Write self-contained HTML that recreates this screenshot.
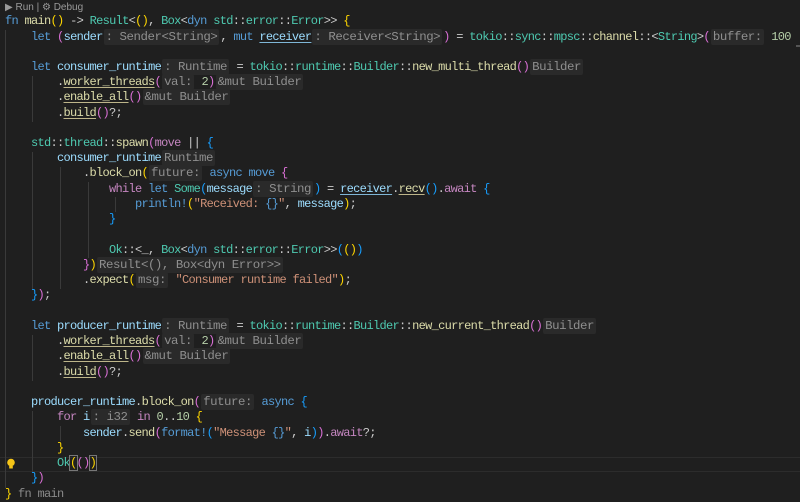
<!DOCTYPE html>
<html><head><meta charset="utf-8"><style>
html,body{margin:0;padding:0;background:#1f1f1f;width:800px;height:502px;overflow:hidden}
.ed{position:relative;width:800px;height:502px;font-family:"Liberation Mono","DejaVu Sans Mono",monospace;font-size:12px;letter-spacing:-0.7px;color:#cccccc}
.l{position:absolute;left:5px;height:15px;line-height:15px;white-space:pre}
.k{color:#569cd6}.c{color:#c586c0}.v{color:#9cdcfe}.t{color:#4ec9b0}.f{color:#dcdcaa}.s{color:#ce9178}.n{color:#b5cea8}.w{color:#d4d4d4}
.p1{color:#ffd700}.p2{color:#da70d6}.p3{color:#179fff}
.h{color:#8f8f8f;background:#2a2a2a;border-radius:2px;padding:1px 2px;margin:0 1px;font-size:12.4px;letter-spacing:-0.45px}
.u{text-decoration:underline;text-decoration-color:#bdb58a;text-underline-offset:2px}
.ub{text-decoration:underline;text-decoration-color:#7fb6d6;text-underline-offset:2px}
.g{position:absolute;width:1px;background:#3a3a3a}
.lens{position:absolute;left:5px;top:2px;font-family:"Liberation Sans","DejaVu Sans",sans-serif;font-size:10px;letter-spacing:0;color:#9a9a9a}
.cur{position:absolute;left:0;width:800px;height:15px;border-top:1px solid #2c2c2c;border-bottom:1px solid #2c2c2c;box-sizing:border-box}
</style></head><body><div class="ed">
<div class="lens">▶ Run | ⚙ Debug</div>
<div class="cur" style="top:457px"></div>
<div class="g" style="left:5px;top:30px;height:458px"></div>
<div class="g" style="left:32px;top:76px;height:46px"></div>
<div class="g" style="left:32px;top:152px;height:137px"></div>
<div class="g" style="left:60px;top:167px;height:122px"></div>
<div class="g" style="left:88px;top:182px;height:76px"></div>
<div class="g" style="left:115px;top:197px;height:15px"></div>
<div class="g" style="left:32px;top:335px;height:46px"></div>
<div class="g" style="left:32px;top:411px;height:61px"></div>
<div class="g" style="left:60px;top:426px;height:15px"></div>
<div class="l" style="top:14px"><span class="k">fn</span> <span class="f">main</span><span class="p1">()</span> -&gt; <span class="t">Result</span>&lt;<span class="p1">()</span>, <span class="t">Box</span>&lt;<span class="k">dyn</span> <span class="t">std</span>::<span class="t">error</span>::<span class="t">Error</span>&gt;&gt; <span class="p1">{</span></div>
<div class="l" style="top:30px">    <span class="k">let</span> <span class="p2">(</span><span class="v">sender</span><span class="h">: Sender&lt;String&gt;</span>, <span class="k">mut</span> <span class="v ub">receiver</span><span class="h">: Receiver&lt;String&gt;</span><span class="p2">)</span> = <span class="t">tokio</span>::<span class="t">sync</span>::<span class="t">mpsc</span>::<span class="f">channel</span>::&lt;<span class="t">String</span>&gt;<span class="p2">(</span><span class="h">buffer:</span> <span class="n">100</span></div>
<div class="l" style="top:60px">    <span class="k">let</span> <span class="v">consumer_runtime</span><span class="h">: Runtime</span> = <span class="t">tokio</span>::<span class="t">runtime</span>::<span class="t">Builder</span>::<span class="f">new_multi_thread</span><span class="p2">()</span><span class="h">Builder</span></div>
<div class="l" style="top:75px">        .<span class="f u">worker_threads</span><span class="p2">(</span><span class="h">val:</span> <span class="n">2</span><span class="p2">)</span><span class="h">&amp;mut Builder</span></div>
<div class="l" style="top:90px">        .<span class="f u">enable_all</span><span class="p2">()</span><span class="h">&amp;mut Builder</span></div>
<div class="l" style="top:106px">        .<span class="f u">build</span><span class="p2">()</span>?;</div>
<div class="l" style="top:136px">    <span class="t">std</span>::<span class="t">thread</span>::<span class="f">spawn</span><span class="p2">(</span><span class="c">move</span> || <span class="p3">{</span></div>
<div class="l" style="top:151px">        <span class="v">consumer_runtime</span><span class="h">Runtime</span></div>
<div class="l" style="top:166px">            .<span class="f">block_on</span><span class="p1">(</span><span class="h">future:</span> <span class="k">async</span> <span class="k">move</span> <span class="p2">{</span></div>
<div class="l" style="top:182px">                <span class="c">while</span> <span class="k">let</span> <span class="t">Some</span><span class="p3">(</span><span class="v">message</span><span class="h">: String</span><span class="p3">)</span> = <span class="v ub">receiver</span>.<span class="f u">recv</span><span class="p3">()</span>.<span class="c">await</span> <span class="p3">{</span></div>
<div class="l" style="top:197px">                    <span class="k">println!</span><span class="p1">(</span><span class="s">"Received: </span><span class="k">{}</span><span class="s">"</span>, <span class="v">message</span><span class="p1">)</span>;</div>
<div class="l" style="top:212px">                <span class="p3">}</span></div>
<div class="l" style="top:243px">                <span class="t">Ok</span>::&lt;_, <span class="t">Box</span>&lt;<span class="k">dyn</span> <span class="t">std</span>::<span class="t">error</span>::<span class="t">Error</span>&gt;&gt;<span class="p3">(</span><span class="p1">()</span><span class="p3">)</span></div>
<div class="l" style="top:258px">            <span class="p2">}</span><span class="p1">)</span><span class="h">Result&lt;(), Box&lt;dyn Error&gt;&gt;</span></div>
<div class="l" style="top:273px">            .<span class="f">expect</span><span class="p1">(</span><span class="h">msg:</span> <span class="s">"Consumer runtime failed"</span><span class="p1">)</span>;</div>
<div class="l" style="top:288px">    <span class="p3">}</span><span class="p2">)</span>;</div>
<div class="l" style="top:319px">    <span class="k">let</span> <span class="v">producer_runtime</span><span class="h">: Runtime</span> = <span class="t">tokio</span>::<span class="t">runtime</span>::<span class="t">Builder</span>::<span class="f">new_current_thread</span><span class="p2">()</span><span class="h">Builder</span></div>
<div class="l" style="top:334px">        .<span class="f u">worker_threads</span><span class="p2">(</span><span class="h">val:</span> <span class="n">2</span><span class="p2">)</span><span class="h">&amp;mut Builder</span></div>
<div class="l" style="top:349px">        .<span class="f u">enable_all</span><span class="p2">()</span><span class="h">&amp;mut Builder</span></div>
<div class="l" style="top:365px">        .<span class="f u">build</span><span class="p2">()</span>?;</div>
<div class="l" style="top:395px">    <span class="v">producer_runtime</span>.<span class="f">block_on</span><span class="p2">(</span><span class="h">future:</span> <span class="k">async</span> <span class="p3">{</span></div>
<div class="l" style="top:410px">        <span class="c">for</span> <span class="v">i</span><span class="h">: i32</span> <span class="c">in</span> <span class="n">0</span>..<span class="n">10</span> <span class="p1">{</span></div>
<div class="l" style="top:426px">            <span class="v">sender</span>.<span class="f">send</span><span class="p2">(</span><span class="k">format!</span><span class="p3">(</span><span class="s">"Message </span><span class="k">{}</span><span class="s">"</span>, <span class="v">i</span><span class="p3">)</span><span class="p2">)</span>.<span class="c">await</span>?;</div>
<div class="l" style="top:441px">        <span class="p1">}</span></div>
<div class="l" style="top:456px">        <span class="t">Ok</span><span class="p1" style="outline:1px solid #777">(</span><span class="p2">()</span><span class="p1" style="outline:1px solid #777">)</span></div>
<div class="l" style="top:471px">    <span class="p3">}</span><span class="p2">)</span></div>
<div class="l" style="top:487px"><span class="p1">}</span> <span style="color:#8a8a8a">fn main</span></div>
<svg style="position:absolute;left:6px;top:458px" width="10" height="12" viewBox="0 0 10 12"><circle cx="5" cy="4.5" r="3.8" fill="#f5c518"/><rect x="3.2" y="8" width="3.6" height="2.5" fill="#f5c518"/></svg>
<div style="position:absolute;left:796px;top:45px;width:4px;height:2px;background:#555"></div>
</div></body></html>
